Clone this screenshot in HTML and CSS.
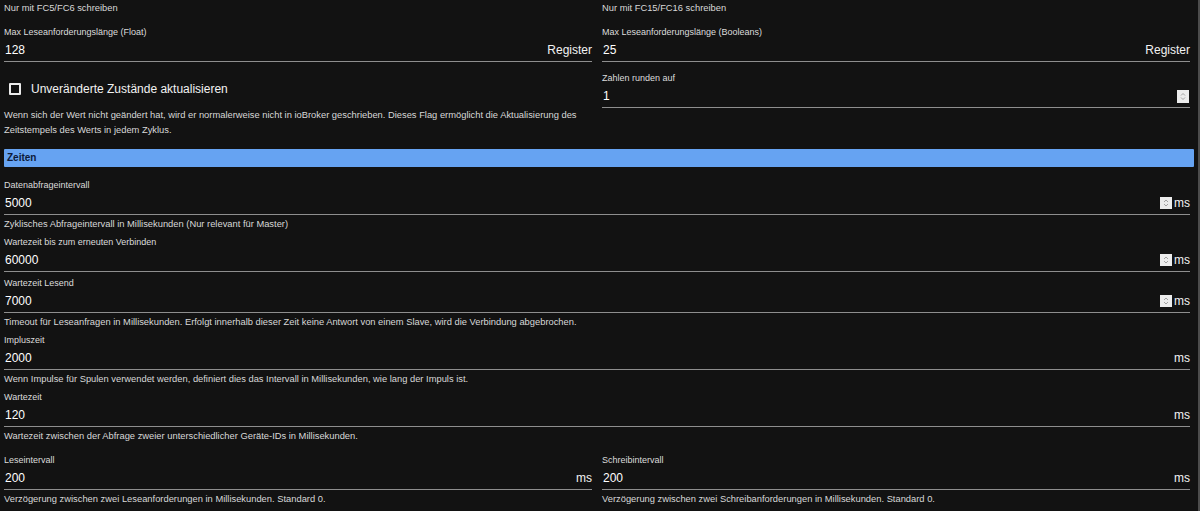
FILE: index.html
```html
<!DOCTYPE html>
<html lang="de">
<head>
<meta charset="utf-8">
<link rel="stylesheet" href="styles.css">
</head>
<body>
<div class="page">
  <div class="grid2 top">
    <p class="help first">Nur mit FC5/FC6 schreiben</p>
    <p class="help first">Nur mit FC15/FC16 schreiben</p>

    <div class="field">
      <label class="label">Max Leseanforderungslänge (Float)</label>
      <div class="row"><span class="value">128</span><span class="unit">Register</span></div>
    </div>
    <div class="field">
      <label class="label">Max Leseanforderungslänge (Booleans)</label>
      <div class="row"><span class="value">25</span><span class="unit">Register</span></div>
    </div>

    <div class="check-cell">
      <div class="check-row"><span class="checkbox"></span><span class="check-label">Unveränderte Zustände aktualisieren</span></div>
      <p class="help help-tall">Wenn sich der Wert nicht geändert hat, wird er normalerweise nicht in ioBroker geschrieben. Dieses Flag ermöglicht die Aktualisierung des Zeitstempels des Werts in jedem Zyklus.</p>
    </div>
    <div class="field">
      <label class="label">Zahlen runden auf</label>
      <div class="row"><span class="value">1</span><span class="spin"><svg width="12" height="13" viewBox="0 0 12 13"><rect x="0" y="0" width="12" height="13" fill="#ececec"/><path d="M4 5.5 L6 3.5 L8 5.5 M4 7.5 L6 9.5 L8 7.5" fill="none" stroke="#9a9a9a" stroke-width="0.9"/></svg></span></div>
    </div>
  </div>

  <div class="section-head">Zeiten</div>

  <div class="stack">
    <div class="field">
      <label class="label">Datenabfrageintervall</label>
      <div class="row"><span class="value">5000</span><span class="spin"><svg width="12" height="12" viewBox="0 0 12 12"><rect width="12" height="12" fill="#ececec"/><path d="M4 5 L6 3 L8 5 M4 7 L6 9 L8 7" fill="none" stroke="#9a9a9a" stroke-width="0.9"/></svg></span><span class="unit tight">ms</span></div>
      <p class="help hint">Zyklisches Abfrageintervall in Millisekunden (Nur relevant für Master)</p>
    </div>
    <div class="field">
      <label class="label">Wartezeit bis zum erneuten Verbinden</label>
      <div class="row"><span class="value">60000</span><span class="spin"><svg width="12" height="12" viewBox="0 0 12 12"><rect width="12" height="12" fill="#ececec"/><path d="M4 5 L6 3 L8 5 M4 7 L6 9 L8 7" fill="none" stroke="#9a9a9a" stroke-width="0.9"/></svg></span><span class="unit tight">ms</span></div>
    </div>
    <div class="field">
      <label class="label">Wartezeit Lesend</label>
      <div class="row"><span class="value">7000</span><span class="spin"><svg width="12" height="12" viewBox="0 0 12 12"><rect width="12" height="12" fill="#ececec"/><path d="M4 5 L6 3 L8 5 M4 7 L6 9 L8 7" fill="none" stroke="#9a9a9a" stroke-width="0.9"/></svg></span><span class="unit tight">ms</span></div>
      <p class="help hint">Timeout für Leseanfragen in Millisekunden. Erfolgt innerhalb dieser Zeit keine Antwort von einem Slave, wird die Verbindung abgebrochen.</p>
    </div>
    <div class="field">
      <label class="label">Impluszeit</label>
      <div class="row"><span class="value">2000</span><span class="unit">ms</span></div>
      <p class="help hint">Wenn Impulse für Spulen verwendet werden, definiert dies das Intervall in Millisekunden, wie lang der Impuls ist.</p>
    </div>
    <div class="field">
      <label class="label">Wartezeit</label>
      <div class="row"><span class="value">120</span><span class="unit">ms</span></div>
      <p class="help hint">Wartezeit zwischen der Abfrage zweier unterschiedlicher Geräte-IDs in Millisekunden.</p>
    </div>
  </div>

  <div class="grid2 bottom">
    <div class="field">
      <label class="label">Leseintervall</label>
      <div class="row"><span class="value">200</span><span class="unit">ms</span></div>
      <p class="help hint">Verzögerung zwischen zwei Leseanforderungen in Millisekunden. Standard 0.</p>
    </div>
    <div class="field">
      <label class="label">Schreibintervall</label>
      <div class="row"><span class="value">200</span><span class="unit">ms</span></div>
      <p class="help hint">Verzögerung zwischen zwei Schreibanforderungen in Millisekunden. Standard 0.</p>
    </div>
  </div>
</div>
</body>
</html>
```

FILE: styles.css
```css
* { box-sizing: border-box; }
html, body {
  margin: 0;
  padding: 0;
  background: #121212;
}
body {
  font-family: "Liberation Sans", Arial, sans-serif;
  color: #e6e6e6;
}
.page {
  width: 1200px;
  height: 511px;
  overflow: hidden;
  padding: 0 4px 0 4px;
  border-right: 2px solid #4c4c4c;
}
.grid2 {
  display: grid;
  grid-template-columns: 1fr 1fr;
  column-gap: 10px;
  padding-right: 4px;
  align-items: start;
}
.top {
  padding-top: 2px;
  row-gap: 10px;
}
.help {
  margin: 0;
  font-size: 9.35px;
  line-height: 12px;
  color: #d8d8d8;
}
.help.first {
  margin-bottom: 2px;
}
.field {
  display: flex;
  flex-direction: column;
}
.label {
  font-size: 9px;
  line-height: 12px;
  color: #dcdcdc;
}
.row {
  display: flex;
  align-items: center;
  height: 24px;
  padding-top: 1px;
  border-bottom: 1px solid #8e8e8e;
  padding-left: 1px;
}
.value {
  flex: 1;
  font-size: 12px;
  color: #ffffff;
}
.unit {
  font-size: 12px;
  color: #f2f2f2;
}
.unit.tight {
  margin-left: 1px;
}
.spin {
  display: flex;
  width: 12px;
  margin-right: 1px;
}
.spin svg { display: block; }
.check-cell {
  display: flex;
  flex-direction: column;
}
.check-row {
  display: flex;
  align-items: center;
  gap: 10px;
  margin-top: 11px;
  padding-left: 5px;
  height: 12px;
}
.checkbox {
  width: 12px;
  height: 12px;
  border: 2px solid #ececec;
  border-radius: 1px;
}
.check-label {
  font-size: 12px;
  color: #f2f2f2;
}
.help-tall {
  margin-top: 13px;
  line-height: 15px;
}
.section-head {
  margin-top: 11px;
  height: 18px;
  background: #66a3f2;
  color: #0d1a3a;
  font-weight: bold;
  font-size: 10px;
  line-height: 18px;
  padding-left: 3px;
  border-radius: 1px;
}
.stack {
  display: flex;
  flex-direction: column;
  gap: 5px;
  padding-top: 12px;
  padding-right: 4px;
}
.hint {
  margin-top: 3px;
  padding-bottom: 1px;
}
.bottom {
  margin-top: 11px;
}
```
